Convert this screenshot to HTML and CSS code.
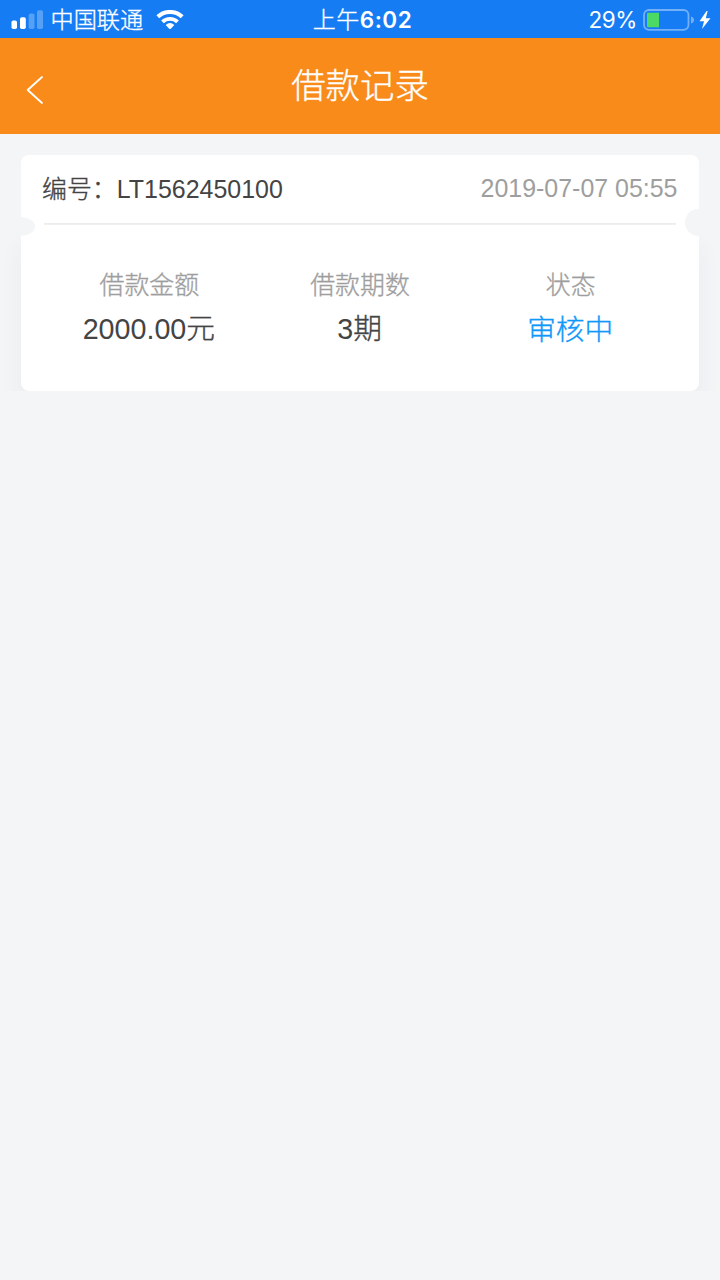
FILE: index.html
```
<!DOCTYPE html>
<html lang="zh-CN">
<head>
<meta charset="utf-8">
<title>借款记录</title>
<link rel="stylesheet" href="styles.css">
</head>
<body>
<div class="status">
  <div class="status-left">
    <svg class="signal" width="32" height="20" viewBox="0 0 32 20" fill="#fff">
      <rect x="0.5" y="10.5" width="5.5" height="8.5" rx="1.8"/>
      <rect x="9" y="7.2" width="5.8" height="11.8" rx="1.8"/>
      <rect x="17.7" y="3.5" width="5.8" height="15.5" rx="1.8" opacity=".28"/>
      <rect x="26" y="0.3" width="6" height="18.7" rx="1.8" opacity=".28"/>
    </svg>
    <span class="carrier cjk">中国联通</span>
    <svg class="wifi" width="28" height="20" viewBox="0 0 28 20" fill="none" stroke="#fff" stroke-width="4">
      <path d="M1.8 6.8C8.5.3 19.5.3 26.2 6.8"/>
      <path d="M6.5 11.9C10.6 7.9 17.4 7.9 21.5 11.9" stroke-width="3.9"/>
      <path d="M9.7 15Q14 11.2 18.3 15L15 18.6Q14 19.6 13 18.6Z" fill="#fff" stroke="none"/>
    </svg>
  </div>
  <div class="time"><span class="ampm cjk">上午</span>6:02</div>
  <div class="status-right">
    <span class="percent">29%</span>
    <svg class="battery" width="52" height="22" viewBox="0 0 52 22">
      <rect x="1" y="1" width="44.5" height="19.8" rx="5" fill="none" stroke="#fff" stroke-opacity=".4" stroke-width="1.8"/>
      <path d="M48 7.5Q51 8.5 51 11T48 14.5Z" fill="#fff" fill-opacity=".4"/>
      <path d="M5.2 3.8H16V18.2H5.2Q4 18.2 4 17V5Q4 3.8 5.2 3.8Z" fill="#4cd964"/>
    </svg>
    <svg class="bolt" width="12" height="18" viewBox="0 0 12 18" fill="#fff">
      <path d="M7.6 0L.5 10.2H5L3 18L11.5 7.2H6.8L8.6 0Z"/>
    </svg>
  </div>
</div>
<header class="nav">
  <svg class="back" width="18" height="30" viewBox="0 0 18 30" fill="none" stroke="#fff" stroke-width="1.8" stroke-linecap="round" stroke-linejoin="round">
    <path d="M16 2L1.7 15L16 28"/>
  </svg>
  <h1 class="title cjk">借款记录</h1>
</header>
<main class="list">
  <article class="card">
    <div class="card-head">
      <span class="number"><span class="cjk">编号：</span>LT1562450100</span>
      <time class="date">2019-07-07 05:55</time>
    </div>
    <div class="card-body">
      <div class="cell"><span class="label cjk">借款金额</span><span class="value">2000.00<span class="cjk">元</span></span></div>
      <div class="cell"><span class="label cjk">借款期数</span><span class="value">3<span class="cjk">期</span></span></div>
      <div class="cell"><span class="label cjk">状态</span><span class="value pending cjk">审核中</span></div>
    </div>
    <i class="notch notch-left"></i>
    <i class="notch notch-right"></i>
  </article>
</main>
</body>
</html>
```
FILE: styles.css
```
* { box-sizing: border-box; }
body {
  margin: 0;
  min-height: 1280px;
  background: #f4f5f7;
  font-family: "Liberation Sans", "Noto Sans CJK SC", sans-serif;
  color: #444;
}
svg { display: block; flex: none; }
.cjk {
  font-weight: 300;
  -webkit-text-stroke: 0.35px currentColor;
}
.status {
  display: grid;
  grid-template-columns: 1fr auto 1fr;
  height: 38px;
  padding: 0 9px 0 11px;
  background: #167cf3;
  color: #fff;
  line-height: 38px;
}
.status-left, .status-right { display: flex; align-items: center; }
.status-right { justify-content: flex-end; }
.carrier { margin-left: 7.5px; font-size: 23.2px; line-height: 40px; }
.wifi { margin-left: 12.5px; }
.time {
  padding-left: 3px;
  font: 600 22.5px/40px Inter, "Noto Sans CJK SC", sans-serif;
  letter-spacing: 0.5px;
  white-space: nowrap;
}
.ampm { font-size: 23px; }
.percent {
  margin-right: 6px;
  font-family: Inter, sans-serif;
  font-size: 22.5px;
  letter-spacing: -0.4px;
  line-height: 40px;
}
.bolt { margin-left: 4px; }
.nav {
  display: grid;
  grid-template-columns: 26px 1fr 26px;
  height: 96px;
  padding-top: 19px;
  background: #f98b1a;
  color: #fff;
}
.back { margin: 18px 0 0 26px; }
.title {
  margin: 0;
  text-align: center;
  font-size: 34.4px;
  line-height: 59px;
}
.list { padding: 21px 0 0; }
.card {
  position: relative;
  height: 236px;
  padding: 0 21px;
  overflow: hidden;
}
.card-head {
  display: flex;
  justify-content: space-between;
  height: 68px;
  padding: 0 21.5px 0 21px;
  border-radius: 8px 8px 0 0;
  background: #fff;
  font-size: 24.95px;
  line-height: 69px;
}
.date { color: #9e9e9e; line-height: 67px; }
.card-body {
  display: grid;
  grid-template-columns: repeat(3, 1fr);
  height: 168px;
  padding: 40px 23px 0;
  border-radius: 0 0 8px 8px;
  background: linear-gradient(#ebebeb, #f2f2f2) 23px 0 / 632px 2px no-repeat #fff;
  box-shadow: 0 24px 24px rgba(60, 65, 80, .05);
}
.cell { display: flex; flex-direction: column; align-items: center; }
.label { font-size: 24.9px; line-height: 45px; color: #9e9e9e; }
.value { margin-right: 1px; font-size: 28.7px; line-height: 43px; }
.pending { line-height: 44px; color: #0f98fa; }
.notch { position: absolute; background: #f4f5f7; }
.notch-left { left: 6px; top: 62px; width: 29px; height: 19px; border-radius: 50%; }
.notch-right { left: 685px; top: 54px; width: 27px; height: 27px; border-radius: 50%; }
```
